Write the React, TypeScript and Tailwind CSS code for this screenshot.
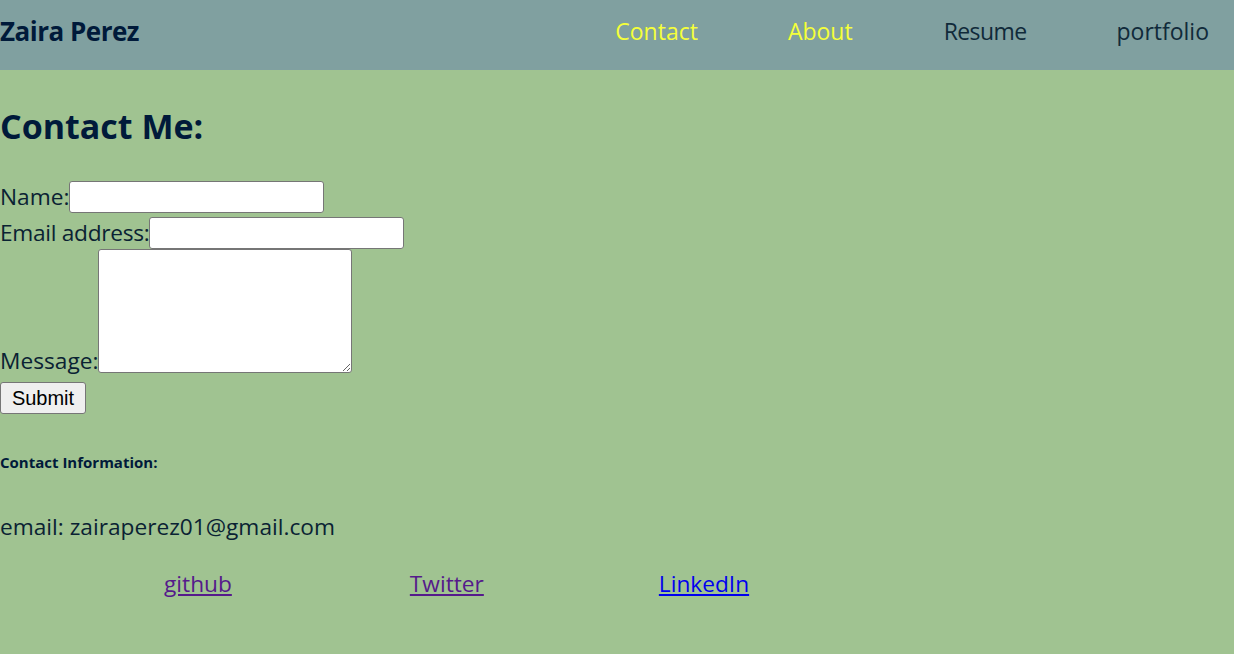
import React from "react";

export default function App() {
  return (
    <div className="min-h-[654px] w-full bg-[#a0c391] text-[#0a2233]" style={{ fontFamily: '"Open Sans", "Noto Sans", sans-serif' }}>
      <header className="h-[70px] bg-[#80a0a0] flex items-center pb-[8px]">
        <div className="text-[26px] font-bold text-[#001a3a] tracking-[-0.5px]">Zaira Perez</div>
        <nav className="ml-auto flex items-center text-[23px] mr-[25px]">
          <a className="text-[#f5ff3a]">Contact</a>
          <a className="ml-[90px] text-[#f5ff3a]">About</a>
          <a className="ml-[91px] text-[#102a3a] tracking-[-0.6px]">Resume</a>
          <a className="ml-[90px] text-[#102a3a]">portfolio</a>
        </nav>
      </header>
      <main>
        <h1 className="text-[34px] font-bold text-[#001a3a] mt-[33px] leading-none h-[45px] flex items-center">Contact Me:</h1>
        <form className="text-[22.7px] mt-[33px]">
          <div className="flex items-center h-[32px]">
            <span>Name:</span>
            <input className="w-[255px] h-[32px] bg-white border border-[#767676] rounded-[3px]" />
          </div>
          <div className="flex items-center h-[32px] mt-[4px]">
            <span className="tracking-[-0.3px]">Email address:</span>
            <input className="w-[255px] h-[32px] bg-white border border-[#767676] rounded-[3px]" />
          </div>
          <div className="flex items-end">
            <span className="leading-none mb-[0px]">Message:</span>
            <textarea className="w-[254px] h-[124px] bg-white border border-[#767676] rounded-[3px] resize-y" />
          </div>
          <button type="button" className="mt-[9px] h-[32px] w-[86px] bg-[#efefef] border border-[#767676] rounded-[3px] text-[20px] text-black" style={{ fontFamily: '"Liberation Sans", Arial, sans-serif' }}>Submit</button>
        </form>
        <h4 className="text-[15px] font-bold text-[#001a3a] mt-[37px]">Contact Information:</h4>
        <p className="text-[22.7px] mt-[36px]">email: zairaperez01@gmail.com</p>
        <div className="flex text-[22.7px] mt-[23px]">
          <a className="ml-[164px] underline text-[#551a8b]">github</a>
          <a className="ml-[178px] underline text-[#551a8b]">Twitter</a>
          <a className="ml-[175px] underline text-[#0000ee]">LinkedIn</a>
        </div>
      </main>
    </div>
  );
}
